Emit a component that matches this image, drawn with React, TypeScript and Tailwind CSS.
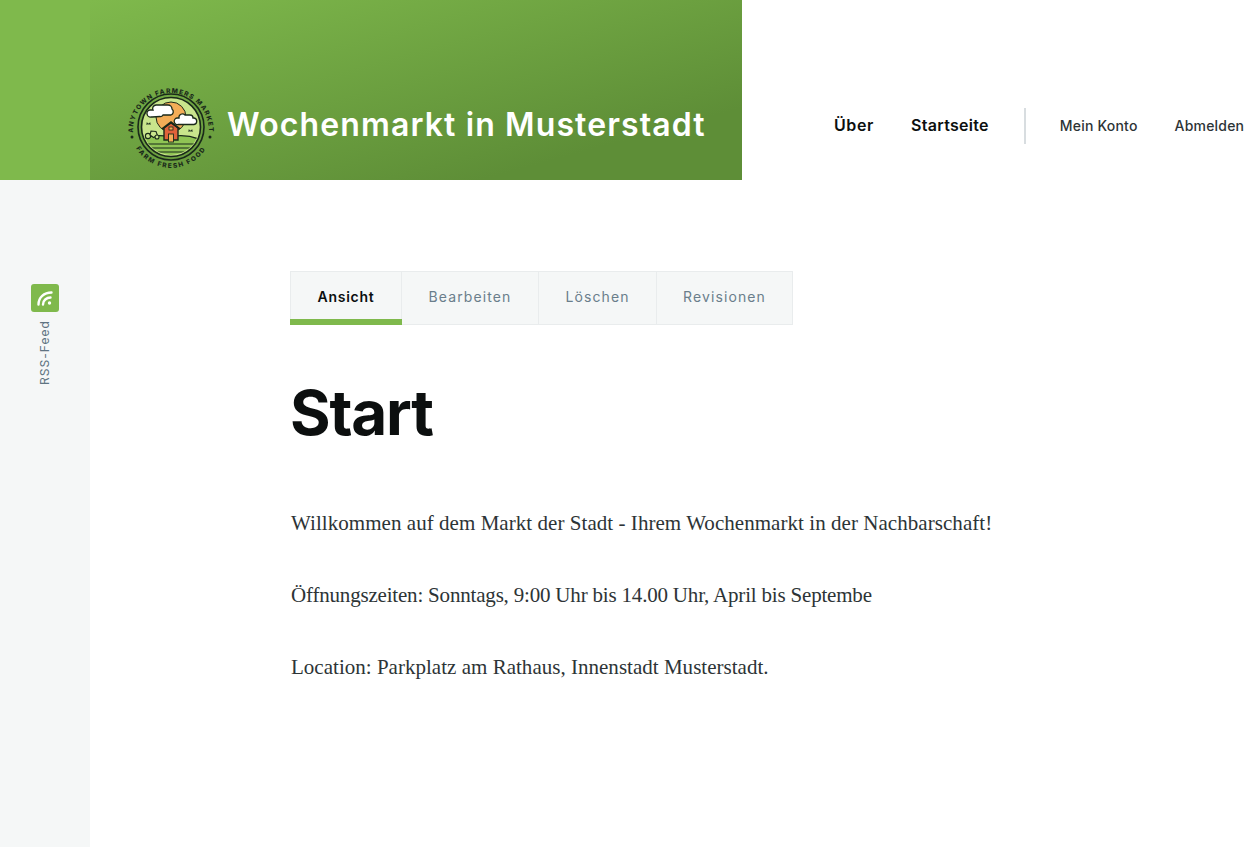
export default function App() {
  const sans = "font-['Inter','Liberation_Sans',sans-serif]";
  return (
    <div className={`h-[847px] w-[1244px] overflow-hidden bg-white flex flex-col ${sans}`}>
      <header className="flex h-[180px] shrink-0">
        <div className="w-[90px] shrink-0 bg-[#7fb94c]" />
        <div className="w-[652px] shrink-0 bg-linear-[to_bottom_right,#7fb94c_0%,#5e8e37_80%] flex items-center pl-[36px] pt-[72px] gap-[11px]">
          <Logo />
          <span className="mb-[2px] text-[32px] leading-none font-semibold text-white tracking-[1.12px] whitespace-nowrap">Wochenmarkt in Musterstadt</span>
        </div>
        <nav className="flex-1 flex items-center pl-[92px] pt-[70px] whitespace-nowrap">
          <a className="text-[16px] font-semibold text-[#0c0f0f] tracking-[0.6px]">Über</a>
          <a className="ml-[37px] text-[16px] font-semibold text-[#0c0f0f] tracking-[0.3px]">Startseite</a>
          <div className="ml-[35px] mt-[2px] w-[2px] h-[36px] bg-[#d8dde0]" />
          <a className="ml-[34px] text-[14px] font-medium text-[#2d3436] tracking-[0.2px]">Mein Konto</a>
          <a className="ml-[37px] text-[14px] font-medium text-[#2d3436] tracking-[0.2px]">Abmelden</a>
        </nav>
      </header>
      <div className="flex flex-1 min-h-0">
        <aside className="w-[90px] bg-[#f5f7f7] flex flex-col items-center pt-[104px]">
          <div className="w-[28px] h-[28px] rounded-[3px] bg-[#7fb94c] flex items-center justify-center">
            <svg width="16" height="16" viewBox="0 0 16 16" fill="none" stroke="white" strokeWidth="2.4" strokeLinecap="round">
              <path d="M1.500 14.500C1.500 7.500 7 2.500 14.500 2.500" />
              <path d="M6 14.500C6 10.500 9.500 7.500 13.500 7.500" />
              <circle cx="12.500" cy="13" r="1.700" fill="white" stroke="none" />
            </svg>
          </div>
          <span className="mt-[8px] text-[12px] leading-[14px] text-[#5f7482] tracking-[1.05px] [writing-mode:vertical-rl] rotate-180">RSS-Feed</span>
        </aside>
        <main className="flex-1 pl-[200px] pt-[91px]">
          <div className="flex h-[54px] w-fit text-[14px] tracking-[1.1px]">
            <div className="w-[111px] bg-[#f5f7f7] border border-[#e9eced] border-b-0 border-r-0 flex flex-col relative z-10">
              <span className="flex-1 flex items-center justify-center font-semibold text-[#0c0f0f] tracking-[0.75px] pt-[2px]">Ansicht</span>
              <div className="h-[6px] bg-[#7fb94c] -ml-px -mr-px" />
            </div>
            <Tab w="w-[137px]">Bearbeiten</Tab>
            <Tab w="w-[118px]">Löschen</Tab>
            <Tab w="w-[137px]" last>Revisionen</Tab>
          </div>
          <h1 className="mt-[53px] text-[62px] leading-[70px] font-bold text-[#0c0f0f] tracking-[-1.2px]">Start</h1>
          <div className="mt-[60px] flex flex-col gap-[42px] pl-px font-['Liberation_Serif',serif] text-[21px] tracking-[0.05px] leading-[30px] text-[#2d3436]">
            <p className="whitespace-nowrap">Willkommen auf dem Markt der Stadt - Ihrem Wochenmarkt in der Nachbarschaft!</p>
            <p className="whitespace-nowrap tracking-[-0.19px]">Öffnungszeiten: Sonntags, 9:00 Uhr bis 14.00 Uhr, April bis Septembe</p>
            <p className="whitespace-nowrap tracking-[0.02px]">Location: Parkplatz am Rathaus, Innenstadt Musterstadt.</p>
          </div>
        </main>
      </div>
    </div>
  );
}

function Tab({ w, last, children }: { w: string; last?: boolean; children: string }) {
  return (
    <div className={`${w} bg-[#f5f7f7] border border-[#e9eced] ${last ? "" : "border-r-0"} flex items-center justify-center text-[#6a7e8b] font-normal pb-[3px]`}>
      {children}
    </div>
  );
}

function Logo() {
  const ink = "#1a2a1a";
  return (
    <svg width="90" height="90" viewBox="0 0 90 90" className="shrink-0">
      <defs>
        <path id="arcTop" d="M7 50 A38 38 0 1 1 83 50" />
        <path id="arcBottom" d="M4 46 A41 41 0 0 0 86 46" />
        <clipPath id="inner"><circle cx="45" cy="46" r="28" /></clipPath>
      </defs>
      <text fontSize="6.500" fontWeight="800" fill={ink} letterSpacing="1.100" fontFamily="Inter, sans-serif">
        <textPath href="#arcTop" startOffset="50%" textAnchor="middle">ANYTOWN FARMERS MARKET</textPath>
      </text>
      <text fontSize="6.500" fontWeight="800" fill={ink} letterSpacing="1.500" fontFamily="Inter, sans-serif">
        <textPath href="#arcBottom" startOffset="50%" textAnchor="middle">FARM FRESH FOOD</textPath>
      </text>
      <circle cx="6" cy="56" r="1.500" fill={ink} />
      <circle cx="84" cy="56" r="1.500" fill={ink} />
      <circle cx="45" cy="46" r="33" fill="none" stroke={ink} strokeWidth="1.600" />
      <circle cx="45" cy="46" r="29.500" fill="#c9e58c" stroke={ink} strokeWidth="1.600" />
      <g clipPath="url(#inner)">
        <circle cx="45" cy="36" r="15" fill="#f3ad57" stroke={ink} strokeWidth="1" />
        <path d="M12 60 Q28 52 44 56 Q60 52 78 60 V85 H12 Z" fill="#8fc454" stroke={ink} strokeWidth="1.200" />
        <path d="M14 63H76M14 67H76M18 71H72M24 75H66" stroke={ink} strokeWidth="1.100" />
      </g>
      <path d="M26 36h-1a3.500 3.500 0 0 1-1-7h3a3.500 3.500 0 0 1 3-5h12a4 4 0 0 1 4 4a3.500 3.500 0 0 1-1 6h-8a3 3 0 0 1-3 1.500z" fill="white" stroke={ink} strokeWidth="1.300" />
      <path d="M52 43.500a3 3 0 0 1-1-6.500h2a3.500 3.500 0 0 1 6-3h5a3 3 0 0 1 3 3h1a3.300 3.300 0 0 1 0 6.500z" fill="white" stroke={ink} strokeWidth="1.300" />
      <path d="M38 59V47l7-5 7 5v12z" fill="#e0623a" stroke={ink} strokeWidth="1.400" />
      <path d="M36 48l9-7 9 7" fill="none" stroke={ink} strokeWidth="1.600" />
      <rect x="43" y="46" width="4" height="3" fill="#f3ad57" stroke={ink} strokeWidth=".8" />
      <rect x="42.500" y="53" width="5" height="8" fill="#f3ad57" stroke={ink} strokeWidth=".9" />
      <circle cx="22" cy="55" r="2.600" fill="#c9e58c" stroke={ink} strokeWidth="1.100" />
      <path d="M24 54l1-4 5 .5 1.500 4-4 2z" fill="#c9e58c" stroke={ink} strokeWidth="1.100" />
      <circle cx="31" cy="56" r="2" fill="#c9e58c" stroke={ink} strokeWidth="1.100" />
      <path d="M20 43h5M21 41.500l1 1.500M24 41.500l-.8 1.500M62 50h5M63 48.500l1 1.500M66 48.500l-.8 1.500" stroke={ink} strokeWidth=".9" fill="none" />
    </svg>
  );
}
